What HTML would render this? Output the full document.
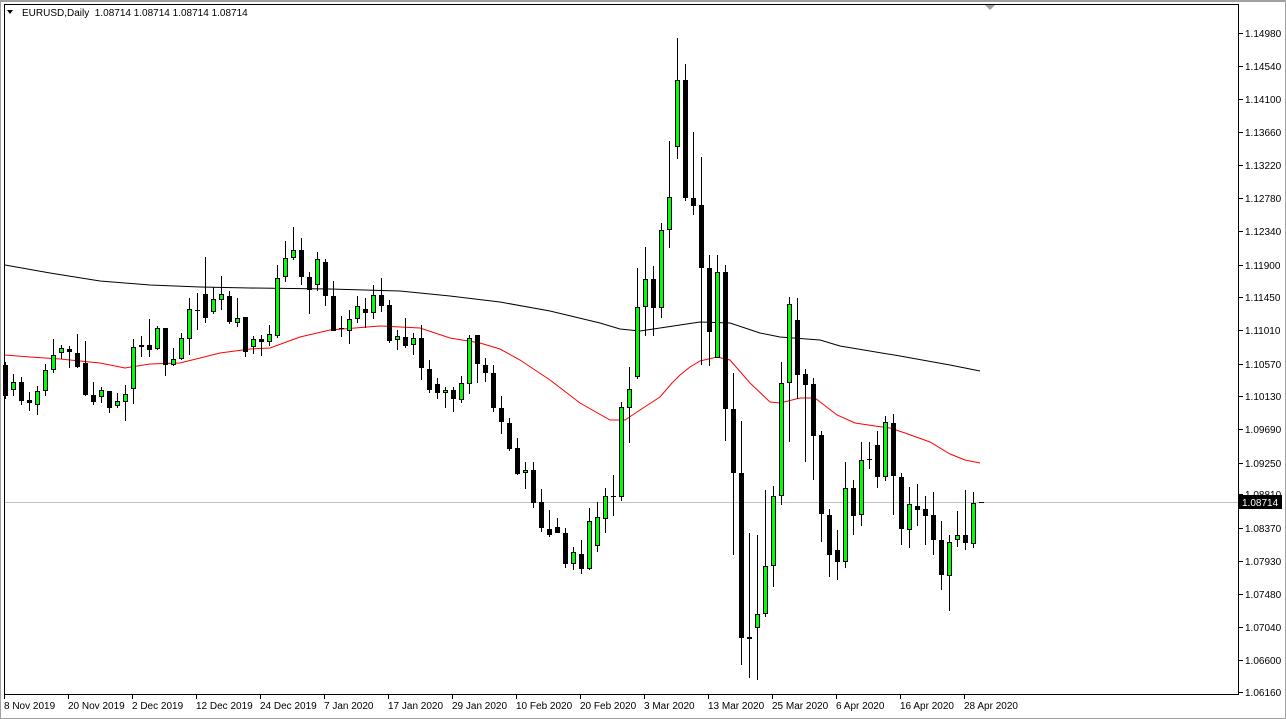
<!DOCTYPE html>
<html><head><meta charset="utf-8"><style>
html,body{margin:0;padding:0;background:#fff;}
body{width:1286px;height:719px;overflow:hidden;position:relative;font-family:"Liberation Sans",Tahoma,sans-serif;}
svg{position:absolute;left:0;top:0;}
</style></head><body>
<svg id="c" width="1286" height="719" xmlns="http://www.w3.org/2000/svg" font-family="Liberation Sans, sans-serif" font-size="10">
<rect x="0" y="0" width="1286" height="719" fill="#fff"/>
<rect x="0.5" y="0.5" width="1285" height="718" fill="none" stroke="#a0a0a0"/>
<line x1="0" y1="1" x2="1286" y2="1" stroke="#a0a0a0" stroke-width="2"/>
<polygon points="985,5 995,5 990,10" fill="#a0a0a0"/>
<rect x="4.5" y="4.5" width="1234" height="690" fill="none" stroke="#000"/>
<line x1="5" y1="502.5" x2="1238" y2="502.5" stroke="#c0c0c0"/>
<polyline fill="none" stroke="#000" stroke-width="1" points="5,265 50,273 100,281 150,285 200,287 250,288 330,289 400,291 450,296 500,302 550,311 600,323 620,329 640,331 660,328 680,325 700,322 730,323 760,333 780,337 820,340 840,346 900,356 950,365 980,371"/>
<polyline fill="none" stroke="#f00" stroke-width="1" points="5,355 30,357 60,359 100,363 125,368 150,364 180,363 220,353 250,349 270,348 300,337 330,330 380,326 420,328 450,338 480,343 500,349 520,360 550,380 580,403 610,420 625,420 640,410 660,397 672,383 680,375 690,367 700,361 717,357 730,360 750,383 770,402 780,403 800,398 815,398 837,415 855,423 875,426 890,428 905,433 930,442 950,454 965,460 980,463"/>
<g id="candles"></g>
<g id="axis" fill="#000"></g>
<text x="22" y="16" font-size="10" fill="#000">EURUSD,Daily&#160;&#160;1.08714 1.08714 1.08714 1.08714</text>
<polygon points="7,10 13,10 10,14" fill="#000"/>
<rect x="1239" y="495" width="43" height="14" fill="#000"/>
<text x="1242" y="506" fill="#fff">1.08714</text>
</svg>
<script>
var d=[
[365,396,362,399,0],[382,390,374,396,1],[382,401,377,405,0],[400,403,392,411,0],[391,405,386,415,1],
[370,391,364,396,1],[355,370,339,373,1],[348,353,345,359,1],[349,352,346,368,0],[353,367,334,368,0],
[363,395,341,396,0],[395,402,382,405,0],[390,397,387,403,1],[391,408,391,413,0],[401,406,393,408,1],
[394,402,385,421,1],[347,389,339,404,1],[345,347,336,357,1],[345,350,319,357,0],[328,349,326,350,1],
[328,365,328,376,0],[359,365,348,366,1],[338,359,333,360,1],[309,339,298,355,1],[310,311,293,330,0],
[294,318,257,323,0],[299,312,287,314,1],[294,300,276,310,1],[296,322,291,324,0],[318,323,298,327,1],
[317,352,317,357,0],[339,347,336,354,1],[339,342,335,356,0],[334,342,325,346,1],[278,336,265,338,1],
[258,277,241,282,1],[250,258,227,260,1],[250,277,238,285,0],[277,290,272,314,0],[259,285,252,291,1],
[262,296,259,306,0],[296,331,281,331,0],[328,329,316,337,0],[319,331,310,344,1],[306,319,296,323,1],
[309,313,298,328,0],[295,313,285,319,1],[295,306,278,312,0],[305,341,300,343,0],[336,340,330,350,1],
[337,346,318,348,0],[338,345,333,355,1],[338,368,325,380,0],[369,390,360,393,0],[384,393,378,399,0],
[390,393,387,408,1],[390,399,387,412,0],[383,400,376,403,1],[338,384,335,394,1],[335,364,335,383,0],
[365,373,358,382,0],[373,408,365,412,0],[408,422,396,434,0],[423,449,418,451,0],[448,474,438,475,0],
[470,473,462,489,1],[470,503,462,508,0],[502,528,489,532,0],[529,535,510,537,0],[527,533,518,533,0],
[533,564,528,568,0],[552,564,547,570,1],[554,569,540,574,0],[521,569,508,570,1],[517,546,502,552,1],
[496,519,488,533,1],[496,497,475,516,0],[407,497,402,501,1],[389,408,367,443,1],[307,377,268,379,1],
[279,307,247,336,1],[279,308,266,336,0],[230,308,223,318,1],[197,230,141,248,1],[80,147,38,159,1],
[80,198,64,201,0],[198,206,132,215,0],[205,268,157,365,0],[268,332,255,366,0],[272,358,255,358,1],
[272,409,265,441,0],[409,473,373,555,0],[473,638,421,665,0],[637,639,533,678,0],[614,628,535,680,1],
[566,614,490,617,1],[496,566,486,587,1],[383,496,362,505,1],[304,383,297,442,1],[320,375,298,399,0],
[374,385,369,462,0],[384,436,378,480,0],[435,514,431,542,0],[515,555,509,577,0],[550,562,530,580,0],
[488,562,462,568,1],[488,516,480,535,0],[460,515,442,526,1],[459,460,442,469,0],[445,477,431,488,0],
[422,477,416,481,1],[423,476,414,515,0],[477,529,473,545,0],[504,530,487,548,1],[506,510,484,526,0],
[509,516,496,545,0],[515,540,492,555,0],[540,575,521,590,0],[542,576,535,611,1],[535,540,511,547,1],
[535,543,490,550,0],[503,544,492,548,1],[502,502,502,502,0]];
var s='';
d.forEach(function(c,n){
 var cx=5.5+8*n, x=3+8*n;
 if(n===122){s+='<line x1="'+(x)+'" y1="502.5" x2="'+(x+5)+'" y2="502.5" stroke="#000"/>';return;}
 s+='<line x1="'+cx+'" y1="'+c[2]+'" x2="'+cx+'" y2="'+c[3]+'" stroke="#000"/>';
 var h=Math.max(1,c[1]-c[0]);
 if(c[4]) s+='<rect x="'+(x+0.5)+'" y="'+(c[0]+0.5)+'" width="4" height="'+Math.max(1,h-1)+'" fill="#00ff00" stroke="#000"/>';
 else s+='<rect x="'+x+'" y="'+c[0]+'" width="5" height="'+h+'" fill="#000"/>';
});
document.getElementById('candles').innerHTML=s;
var p=[["1.14980",33],["1.14540",66],["1.14100",99],["1.13660",132],["1.13220",165],["1.12780",198],["1.12340",231],["1.11900",265],["1.11450",297],["1.11010",330],["1.10570",364],["1.10130",396],["1.09690",429],["1.09250",463],["1.08810",494],["1.08370",528],["1.07930",561],["1.07480",594],["1.07040",627],["1.06600",660],["1.06160",692]];
var a='';
p.forEach(function(q){a+='<line x1="1239" y1="'+(q[1]+0.5)+'" x2="1243" y2="'+(q[1]+0.5)+'" stroke="#000"/><text x="1245" y="'+(q[1]+4)+'">'+q[0]+'</text>';});
var t=["8 Nov 2019","20 Nov 2019","2 Dec 2019","12 Dec 2019","24 Dec 2019","7 Jan 2020","17 Jan 2020","29 Jan 2020","10 Feb 2020","20 Feb 2020","3 Mar 2020","13 Mar 2020","25 Mar 2020","6 Apr 2020","16 Apr 2020","28 Apr 2020"];
t.forEach(function(q,i){var x=4+64*i;a+='<line x1="'+(x+0.5)+'" y1="695" x2="'+(x+0.5)+'" y2="699" stroke="#000"/><text x="'+x+'" y="709">'+q+'</text>';});
document.getElementById('axis').innerHTML=a;
</script>
</body></html>
